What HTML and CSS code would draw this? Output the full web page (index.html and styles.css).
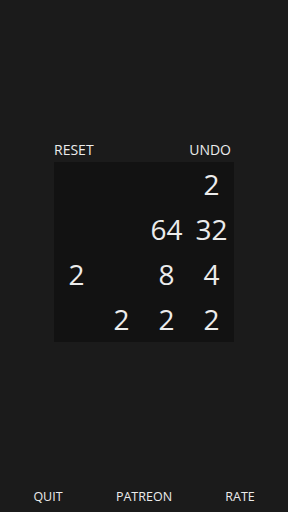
FILE: index.html
```html
<!DOCTYPE html>
<html>
<head>
<meta charset="utf-8">
<link rel="stylesheet" href="styles.css">
</head>
<body>
<div class="app">
  <div class="game">
    <div class="topbar">
      <span class="btn">RESET</span>
      <span class="btn">UNDO</span>
    </div>
    <div class="board">
      <div class="cell"></div><div class="cell"></div><div class="cell"></div><div class="cell">2</div>
      <div class="cell"></div><div class="cell"></div><div class="cell">64</div><div class="cell">32</div>
      <div class="cell">2</div><div class="cell"></div><div class="cell">8</div><div class="cell">4</div>
      <div class="cell"></div><div class="cell">2</div><div class="cell">2</div><div class="cell">2</div>
    </div>
  </div>
  <div class="footer">
    <span class="btn">QUIT</span>
    <span class="btn">PATREON</span>
    <span class="btn">RATE</span>
  </div>
</div>
</body>
</html>
```
FILE: styles.css
```css
html, body {
  margin: 0;
  padding: 0;
  background: #1b1b1b;
}
body {
  font-family: "Open Sans", "Noto Sans", sans-serif;
  color: #ececec;
}
.app {
  width: 288px;
  height: 512px;
  display: flex;
  flex-direction: column;
  align-items: center;
}
.game {
  margin-top: 140px;
  width: 180px;
  display: flex;
  flex-direction: column;
}
.topbar {
  display: flex;
  justify-content: space-between;
  height: 20px;
  line-height: 20px;
  font-size: 14px;
  padding-right: 3px;
  margin-bottom: 2px;
}
.board {
  display: grid;
  grid-template-columns: repeat(4, 45px);
  grid-template-rows: repeat(4, 45px);
  background: #121212;
}
.cell {
  display: flex;
  align-items: center;
  justify-content: center;
  font-size: 28px;
  line-height: 1;
  padding-bottom: 2px;
  box-sizing: border-box;
}
.footer {
  margin-top: auto;
  width: 288px;
  display: grid;
  grid-template-columns: repeat(3, 1fr);
  justify-items: center;
  font-size: 12.5px;
  line-height: 20px;
  padding-bottom: 5px;
}
.btn {
  display: block;
}
```
